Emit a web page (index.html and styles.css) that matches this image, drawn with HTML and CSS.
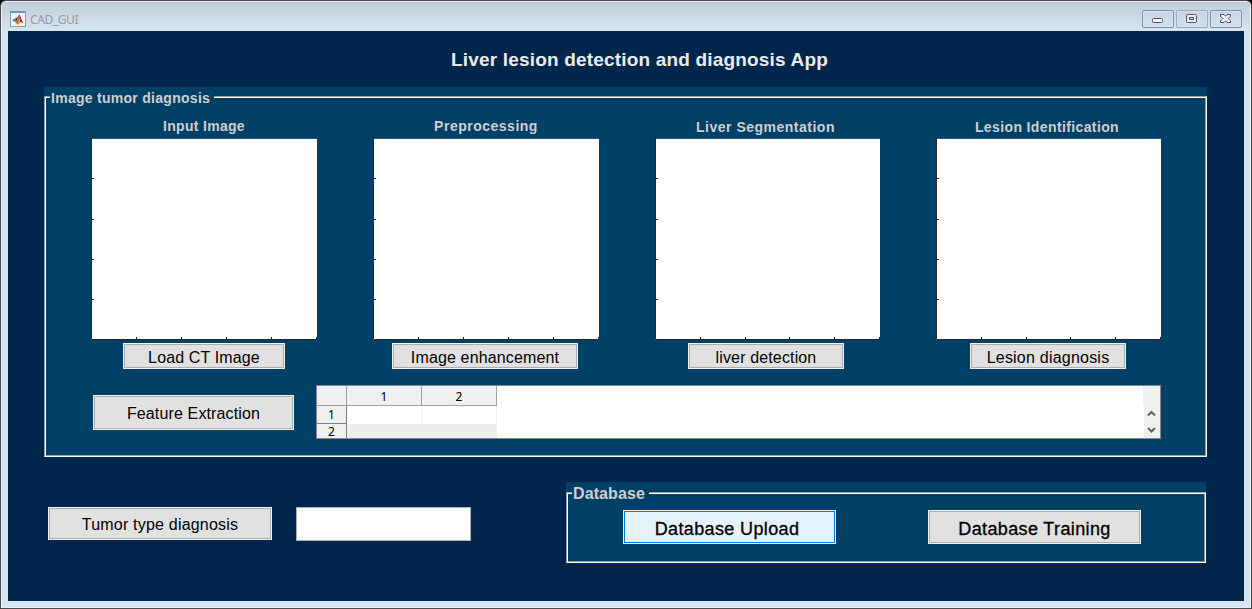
FILE: index.html
```html
<!DOCTYPE html>
<html lang="en">
<head>
<meta charset="utf-8">
<title>CAD_GUI</title>
<link rel="stylesheet" href="styles.css">
</head>
<body>
<div class="window">
  <header class="titlebar">
    <svg class="app-icon" width="16" height="16" viewBox="0 0 16 16">
      <rect x=".5" y=".5" width="15" height="15" fill="#f3f3f2" stroke="#939ba5"/>
      <path d="M0 0h16v2H0z" fill="#6795bd"/>
      <path d="M2 9l3-1.500 2 2L4.500 11z" fill="#3f83bb"/>
      <path d="M5 7.500l2-1L9 4 7.500 9.500 6.500 10z" fill="#275a83"/>
      <path d="M9 3.500c1 0 2 5 4.500 9-1.500-1-2.500-2-3.500-1-.8.800-1.500 2-2.500 2.200-.5-1-1.300-2-2.500-2.700C7 10 8 6 9 3.500z" fill="#d95e28"/>
      <path d="M9 3.500c.8 1 1.200 3.500 1.300 7.500-.9.600-1.800 2.500-2.800 2.700C8.800 10 9 7 9 3.500z" fill="#f09b45"/>
      <path d="M9 3.500c1 0 2 5 4.500 9-1.500-1-2-1.500-3-1z" fill="#a92d20"/>
    </svg>
    <span class="caption">CAD_GUI</span>
    <div class="controls">
      <span class="control"><svg width="32" height="18" viewBox="0 0 32 18"><rect x="10.500" y="8.500" width="10" height="4" rx="1" fill="#f4f4f4" stroke="#545569"/></svg></span>
      <span class="control light"><svg width="32" height="18" viewBox="0 0 32 18"><rect x="10.500" y="4.500" width="10" height="8" rx="1" fill="#e9e9ec" stroke="#545569"/><rect x="13.500" y="7.500" width="4" height="2" fill="#c5d2df" stroke="#545569"/></svg></span>
      <span class="control"><svg width="32" height="18" viewBox="0 0 32 18"><path d="M10.500 4.500h3.500l1.500 1.700L17 4.500h3.500v1.700l-2.300 2.300 2.300 2.300v1.700H17l-1.500-1.700-1.500 1.700h-3.500v-1.700l2.300-2.300-2.300-2.300z" fill="#f0f0f1" stroke="#545569"/></svg></span>
    </div>
  </header>
  <main class="canvas">
    <h1 class="heading"><span>Liver lesion detection and diagnosis App</span></h1>
    <section class="panel diagnosis">
      <h2 class="legend">Image tumor diagnosis</h2>
      <div class="frame">
        <div class="stages">
          <div class="stage"><h3 class="name n1">Input Image</h3><div class="axes"><svg class="ticks" width="226" height="202"><path d="M.5 0v201.500H226" /><path d="M0 40.500h3M0 81.500h3M0 121.500h3M0 161.500h3M45.500 199v2M90.500 199v2M135.500 199v2M180.500 199v2M225.500 199v2"/></svg></div><button class="btn b1"><span>Load CT Image</span></button></div>
          <div class="stage"><h3 class="name n2">Preprocessing</h3><div class="axes"><svg class="ticks" width="226" height="202"><path d="M.5 0v201.500H226" /><path d="M0 40.500h3M0 81.500h3M0 121.500h3M0 161.500h3M45.500 199v2M90.500 199v2M135.500 199v2M180.500 199v2M225.500 199v2"/></svg></div><button class="btn b2"><span>Image enhancement</span></button></div>
          <div class="stage"><h3 class="name n3">Liver Segmentation</h3><div class="axes"><svg class="ticks" width="225" height="202"><path d="M.5 0v201.500H225" /><path d="M0 40.500h3M0 81.500h3M0 121.500h3M0 161.500h3M45.500 199v2M90.500 199v2M134.500 199v2M179.500 199v2M224.500 199v2"/></svg></div><button class="btn b3"><span>liver detection</span></button></div>
          <div class="stage"><h3 class="name n4">Lesion Identification</h3><div class="axes"><svg class="ticks" width="225" height="202"><path d="M.5 0v201.500H225" /><path d="M0 40.500h3M0 81.500h3M0 121.500h3M0 161.500h3M45.500 199v2M90.500 199v2M134.500 199v2M179.500 199v2M224.500 199v2"/></svg></div><button class="btn b4"><span>Lesion diagnosis</span></button></div>
        </div>
        <div class="features">
          <button class="btn extract"><span>Feature Extraction</span></button>
          <div class="table">
            <div class="grid">
              <div class="th"></div><div class="th">1</div><div class="th">2</div>
              <div class="rh">1</div><div class="td"></div><div class="td"></div>
              <div class="rh last">2</div><div class="td alt"></div><div class="td alt"></div>
            </div>
            <div class="scroll">
              <div class="corner"></div>
              <div class="track"><svg width="16" height="32" viewBox="0 0 16 32"><path d="M4 9.500l3.500-3.500L11 9.500M4 22l3.500 3.500L11 22" fill="none" stroke="#606060" stroke-width="2"/></svg></div>
            </div>
          </div>
        </div>
      </div>
    </section>
    <div class="bottom">
      <button class="btn tumor"><span>Tumor type diagnosis</span></button>
      <input class="result" type="text" aria-label="Tumor type">
      <section class="panel database">
        <h2 class="legend">Database</h2>
        <div class="frame">
          <button class="btn db active"><span>Database Upload</span></button>
          <button class="btn db"><span>Database Training</span></button>
        </div>
      </section>
    </div>
  </main>
</div>
</body>
</html>
```
FILE: styles.css
```css
* { box-sizing: border-box; }
body { margin: 0; background: #000; font-family: "Liberation Sans", Arial, sans-serif; overflow: hidden; }
h1, h2, h3 { margin: 0; white-space: nowrap; }
.window { width: 1252px; height: 609px; padding: 0 7px 7px 7px; border: 1px solid #4d4b50; border-radius: 6px 6px 0 0; background: linear-gradient(#bfccda, #d7e4f2 30px, #d7e4f2); box-shadow: inset 0 0 0 1px #e8eef5; display: flex; flex-direction: column; }
.titlebar { height: 30px; flex: none; display: flex; align-items: flex-start; padding: 10px 2px 0; }
.app-icon { display: block; }
.caption { margin: 0 auto 0 4px; font: 12px/18px "Noto Sans", sans-serif; letter-spacing: -.4px; color: #969ba1; }
.controls { display: flex; gap: 2px; margin-top: -1px; }
.control { width: 32px; height: 18px; border: 1px solid #8390aa; border-radius: 2px; box-shadow: inset 0 0 0 1px #d3deea; display: flex; align-items: center; justify-content: center; }
.control.light { border-color: #9ba9b9; }
.control svg { flex: none; }

.canvas { height: 570px; background: #00264c; padding: 18px 37px 0 36px; }
.heading { height: 38px; padding-left: 407px; font-size: 19px; line-height: 22px; letter-spacing: .18px; color: #ebebeb; }
.panel { background: #004066; color: #cfcfcf; display: flex; flex-direction: column; }
.legend { align-self: flex-start; position: relative; z-index: 1; background: #004066; }
.frame { border: 1px solid #9b9b9b; border-right-color: #fff; border-bottom-color: #fff; box-shadow: inset 1px 1px #fff, inset -1px -1px #9b9b9b; }
.diagnosis { width: 1163px; height: 370px; }
.diagnosis .legend { height: 20px; margin: 1px 0 -12px 6px; padding: 0 4px 0 1px; font-size: 14px; line-height: 20px; letter-spacing: .28px; }
.diagnosis .frame { height: 361px; padding: 20px 45px 0 46px; }
.stages { display: grid; grid-template-columns: 226px 226px 225px 225px; column-gap: 56px; justify-content: start; }
.stage { display: flex; flex-direction: column; align-items: center; }
.name { height: 21px; font-size: 14px; line-height: 18px; letter-spacing: .5px; }
.n1 { letter-spacing: .3px; }
.n3, .n4 { padding-top: 1px; }
.n3 { margin-right: 4px; }
.n4 { margin-right: 3px; letter-spacing: .38px; }
.axes { align-self: stretch; height: 202px; background: #fff; border-top: 1px solid #27597b; }
.ticks { display: block; margin-top: -1px; fill: none; stroke: #24282c; }
.btn { display: flex; align-items: center; justify-content: center; padding: 0; border: 1px solid #f2f2f2; background: #e1e1e1; box-shadow: inset 0 0 0 1px #adadad; color: #000; font: 16px/20px "Liberation Sans", Arial, sans-serif; letter-spacing: .14px; white-space: nowrap; }
.stage .btn { height: 26px; margin-top: 3px; padding-top: 3px; }
.b1 { width: 162px; }
.b2 { width: 186px; margin-right: 2px; }
.b3 { width: 156px; margin-right: 3px; }
.b4 { width: 156px; margin-right: 1px; }
.stage .b4 { letter-spacing: .22px; }
.features { display: flex; margin-top: 16px; padding-left: 2px; }
.extract { width: 201px; height: 35px; margin: 10px 22px 0 0; padding-top: 2px; }
.table { width: 845px; height: 54px; border: 1px solid #828790; background: #fff; display: flex; justify-content: space-between; overflow: hidden; }
.grid { display: grid; grid-template-columns: 30px 75px 75px; grid-template-rows: 20px 18px 14px; font: 12px/21px "Noto Sans", sans-serif; color: #000; text-align: center; }
.th { background: #f0f0f0; border-right: 1px solid #a0a0a0; border-bottom: 1px solid #a0a0a0; }
.rh { background: #f0f0f0; border-right: 1px solid #808080; border-bottom: 1px solid #808080; line-height: 18px; }
.rh.last { border-bottom: 0; line-height: 16px; }
.td { border-right: 1px solid #f0f0f0; }
.td.alt { background: #eee; }
.scroll { width: 17px; }
.corner { height: 20px; background: #f0f0f0; }
.track { height: 32px; margin-left: 1px; background: #f0f0f0; }
.track svg { display: block; }

.bottom { display: flex; align-items: flex-start; padding: 25px 0 0 4px; }
.tumor { width: 224px; height: 33px; margin-top: 25px; padding-top: 2px; letter-spacing: .2px; }
.result { width: 175px; height: 34px; margin: 25px 95px 0 24px; padding: 0 4px; border: 1px solid #abadb3; background: #fff; border-radius: 0; }
.database { width: 640px; height: 81px; }
.database .legend { height: 20px; margin: 1px 0 -11px 6px; padding: 0 4px 0 1px; font-size: 16px; line-height: 22px; letter-spacing: .1px; }
.database .frame { height: 71px; display: flex; gap: 92px; padding: 17px 0 0 56px; }
.db { width: 213px; height: 34px; font-size: 18px; padding-top: 3px; letter-spacing: .37px; -webkit-text-stroke: .3px #000; }
.db.active { padding-right: 5px; background: #e5f1fb; box-shadow: inset 0 0 0 1px #0078d7; }
```
